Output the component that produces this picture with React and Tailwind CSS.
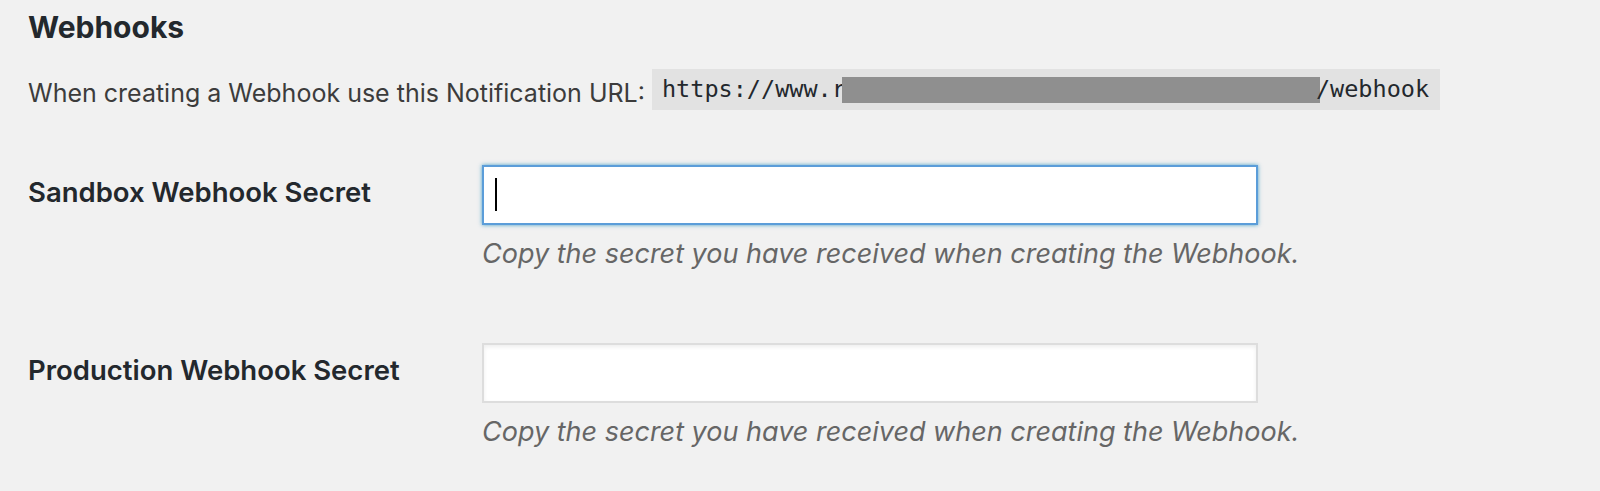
import { useState } from 'react';

const sans = { fontFamily: 'Inter, "Liberation Sans", sans-serif' };

const SecretField = ({ label, focused }) => {
  const [value, setValue] = useState('');

  return (
    <div className="flex items-start">
      <label className="w-[454px] shrink-0 pt-[10px] text-[27.5px] leading-[34px] font-semibold text-[#23282d]">
        {label}
      </label>
      <div className="flex flex-col">
        <div className="relative">
          <input
            type="text"
            value={value}
            onChange={(e) => setValue(e.target.value)}
            className={`w-[776px] h-[60px] bg-white px-3 text-[26px] outline-none ${
              focused
                ? 'border-2 border-[#5b9dd9] shadow-[0_0_4px_rgba(30,140,190,0.8)]'
                : 'border-2 border-[#dddddd] shadow-[inset_0_2px_4px_rgba(0,0,0,0.07)]'
            }`}
          />
          {/* caret drawn so the focus state shows in a still picture */}
          {focused && !value && (
            <span className="absolute left-[13px] top-[13px] h-[33px] w-[2px] bg-black pointer-events-none" />
          )}
        </div>
        <p className="mt-[12px] text-[27px] leading-[34px] italic text-[#666666]">
          Copy the secret you have received when creating the Webhook.
        </p>
      </div>
    </div>
  );
};

const App = () => {
  return (
    <div className="min-h-[491px] bg-[#f1f1f1] pl-[28px] pt-[9px]" style={sans}>
      <h2 className="text-[30px] leading-[36px] font-bold text-[#23282d]">Webhooks</h2>

      <div className="mt-[22px] flex items-center text-[25px] text-[#3c3c3c]">
        <span className="pt-[8px]">When creating a Webhook use this Notification URL:</span>
        <code
          className="ml-[7px] flex h-[41px] items-center bg-[#e2e2e2] pl-[10px] pr-[11px] text-[23.5px] text-[#23282d]"
          style={{ fontFamily: '"DejaVu Sans Mono", "Liberation Mono", monospace' }}
        >
          https://www.r
          <span className="mx-[-4px] inline-block h-[26px] w-[478px] bg-[#8f8f8f]" />
          /webhook
        </code>
      </div>

      <div className="mt-[52px] flex flex-col gap-[72px]">
        <SecretField label="Sandbox Webhook Secret" focused />
        <SecretField label="Production Webhook Secret" />
      </div>
    </div>
  );
};

export default App;
